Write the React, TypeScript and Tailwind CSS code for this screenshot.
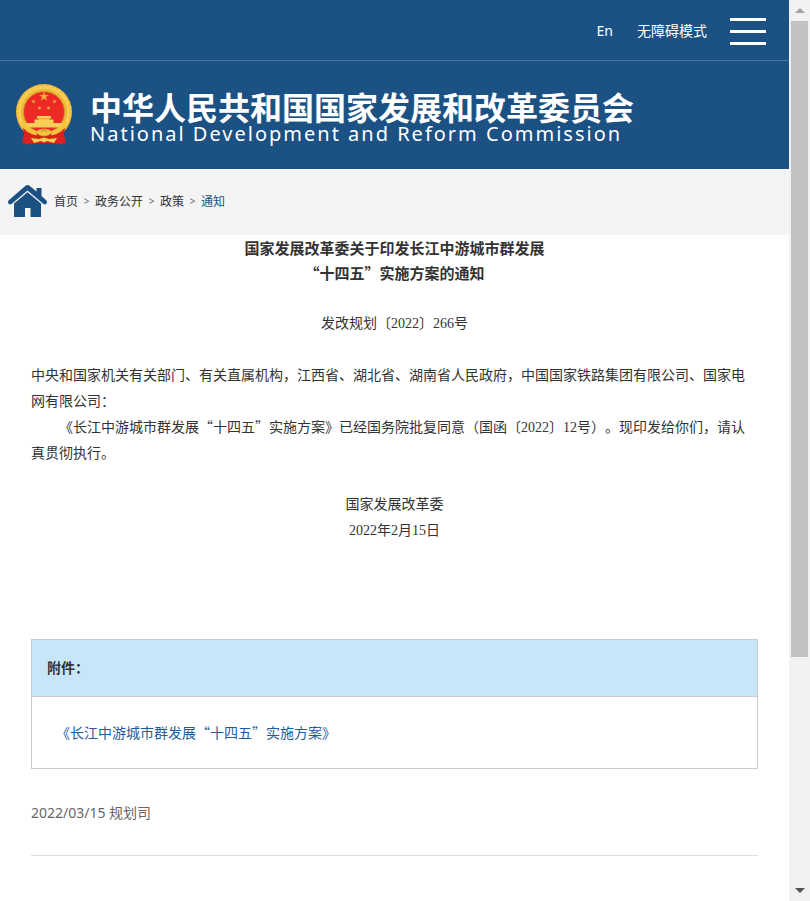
import React from 'react';

const crumbs = ['首页', '政务公开', '政策'];

function Num({ children }: { children: React.ReactNode }) {
  return <span className="font-['Liberation_Serif',serif] leading-none">{children}</span>;
}

function Emblem() {
  const star = 'M0,-5 1.2,-1.6 4.8,-1.5 1.9,0.6 2.9,4 0,2 -2.9,4 -1.9,0.6 -4.8,-1.5 -1.2,-1.6Z';
  return (
    <svg viewBox="0 0 56 62" className="h-[62px] w-[56px] shrink-0" aria-hidden="true">
      <circle cx="28" cy="28" r="28" fill="#efb73b" />
      <circle cx="28" cy="28" r="25" fill="none" stroke="#f8cf4c" strokeWidth="3.5" />
      <circle cx="28" cy="28" r="26" fill="none" stroke="#e3a432" strokeWidth="1" strokeDasharray="1 4" />
      <circle cx="28" cy="28" r="20.5" fill="#ec2924" stroke="#d2962a" strokeWidth="1" />
      <path d={star} transform="translate(28 12.5)" fill="#efb036" />
      <path d={star} transform="translate(17.5 17.5) scale(.45)" fill="#efb036" />
      <path d={star} transform="translate(38.5 17.5) scale(.45)" fill="#efb036" />
      <path d={star} transform="translate(23.5 24) scale(.45)" fill="#efb036" />
      <path d={star} transform="translate(32.5 24) scale(.45)" fill="#efb036" />
      <path d="M21.5 32h13l1 2.5h-2v1h4V39H47q-1.500 2.500-3.500 4.500h-31Q10.500 41.500 9 39h9.500v-3.500h4v-1h-2z" fill="#f8ce56" />
      <path d="M20.500 34.800h15" stroke="#e0772c" strokeWidth=".6" />
      <path d="M7 43q2.500 1.500 5 1.500 7 6 16 6t16-6q2.500 0 5-1.500l-1 8 2 8-7 1.500-6-1.500H19l-6 1.500L6 59l2-8z" fill="#dc201e" />
      <path d="M6.500 39.500Q11 47.500 21 49.500M49.500 39.500Q45 47.500 35 49.500" fill="none" stroke="#f3c23f" strokeWidth="4" />
      <path d="M20 48q3-3 8-3t8 3q-3 4-8 4t-8-4z" fill="#f5c944" stroke="#d99a26" strokeWidth=".7" />
      <path d="M25 48.500a3 2 0 0 1 6 0" fill="none" stroke="#cc7a22" strokeWidth=".8" />
      <path d="M15 54l8 1 5-1.500 5 1.500 8-1-3 5-7-2-3 1.500-3-1.500-7 2z" fill="#f7cf4e" />
    </svg>
  );
}

function HouseIcon() {
  return (
    <svg viewBox="0 0 39 33" className="h-[33px] w-[39px] shrink-0" fill="#1b5183" aria-hidden="true">
      <path d="M19.5 0q1 0 2 .8l7 5.800V3h5v8L38.500 15.500q1 1.500 0 3t-3 .5L19.500 5.500 3.500 19q-2 1-3-.5t0-3L17.500.8q1-.8 2-.8z" />
      <path d="M19.5 7.2 33 18.500V32H22.500V23h-5.500v9H6V18.500z" />
    </svg>
  );
}

function Scrollbar() {
  return (
    <div className="sticky top-0 flex h-screen w-[21px] shrink-0 flex-col items-center bg-[#f1f1f1]" aria-hidden="true">
      <div className="flex h-[21px] items-center">
        <svg viewBox="0 0 10 5" className="h-[5px] w-[10px]"><path d="M0 5 5 0l5 5z" fill="#a3a3a3" /></svg>
      </div>
      <div className="w-full grow px-[2px]">
        <div className="h-[74%] w-full bg-[#c1c1c1]" />
      </div>
      <div className="flex h-[21px] items-center">
        <svg viewBox="0 0 10 5" className="h-[5px] w-[10px]"><path d="M0 0 5 5l5-5z" fill="#505050" /></svg>
      </div>
    </div>
  );
}

export default function App() {
  return (
    <div lang="zh-CN" className="flex min-h-screen bg-white font-['Noto_Sans','Noto_Sans_CJK_SC',sans-serif] text-sm text-[#333]">
      <div className="min-w-0 grow">
        <header className="bg-[#1b5183] text-white">
          <div className="flex h-[61px] items-center justify-end border-b border-[#49749c] pr-[23px] pt-[2px]">
            <a href="#en" className="mr-6">En</a>
            <a href="#accessible" className="mr-[23px]">无障碍模式</a>
            <button type="button" aria-label="菜单" className="flex w-9 flex-col gap-[9px]">
              <span className="h-[3px] w-full bg-white" />
              <span className="h-[3px] w-full bg-white" />
              <span className="h-[3px] w-full bg-white" />
            </button>
          </div>
          <div className="flex h-[108px] items-center gap-[18px] pl-4">
            <Emblem />
            <h1 className="whitespace-nowrap pt-1">
              <span className="block font-['Noto_Sans_CJK_SC',sans-serif] text-[32px] font-bold leading-[32px]">
                中华人民共和国国家发展和改革委员会
              </span>
              <span className="mt-[2px] block text-xl leading-5 tracking-widest">National Development and Reform Commission</span>
            </h1>
          </div>
        </header>

        <nav aria-label="breadcrumb" className="flex h-[66px] items-center bg-[#f4f4f4] pb-[2px] pl-2 text-xs">
          <HouseIcon />
          <ol className="ml-[7px] flex items-center pt-[2px]">
            {crumbs.map((crumb) => (
              <li key={crumb} className="flex items-center">
                <a href="#crumb">{crumb}</a>
                <span className="w-[17px] text-center text-[10px] text-[#666]">&gt;</span>
              </li>
            ))}
            <li>
              <a href="#notice" className="text-[#1b5183]">通知</a>
            </li>
          </ol>
        </nav>

        <main className="px-[31px]">
          <article className="font-['Noto_Sans_CJK_SC',sans-serif] leading-[26px] [text-spacing-trim:space-all]">
            <h2 className="text-center text-[15px] font-bold leading-[25px]">
              国家发展改革委关于印发长江中游城市群发展
              <br />
              “十四五”实施方案的通知
            </h2>
            <p className="mt-6 text-center">
              发改规划〔<Num>2022</Num>〕<Num>266</Num>号
            </p>
            <p className="mt-[26px]">
              中央和国家机关有关部门、有关直属机构，江西省、湖北省、湖南省人民政府，中国国家铁路集团有限公司、国家电网有限公司：
            </p>
            <p className="indent-7">
              《长江中游城市群发展“十四五”实施方案》已经国务院批复同意（国函〔<Num>2022</Num>〕<Num>12</Num>号）。现印发给你们，请认真贯彻执行。
            </p>
            <p className="mt-[25px] text-center">国家发展改革委</p>
            <p className="text-center">
              <Num>2022</Num>年<Num>2</Num>月<Num>15</Num>日
            </p>
          </article>

          <section className="mt-[97px] border border-[#ccc] font-['Noto_Sans_CJK_SC',sans-serif] [text-spacing-trim:space-all]">
            <h3 className="border-b border-[#ccc] bg-[#c7e6fa] px-[15px] pb-[19px] pt-[17px] font-bold">附件：</h3>
            <div className="px-6 py-[25px] leading-[21px]">
              <a href="#attachment" className="text-[#1f5c99]">《长江中游城市群发展“十四五”实施方案》</a>
            </div>
          </section>

          <p className="mt-[34px] border-b border-[#ddd] pb-8 text-[#666]">2022/03/15 规划司</p>
        </main>
      </div>
      <Scrollbar />
    </div>
  );
}
